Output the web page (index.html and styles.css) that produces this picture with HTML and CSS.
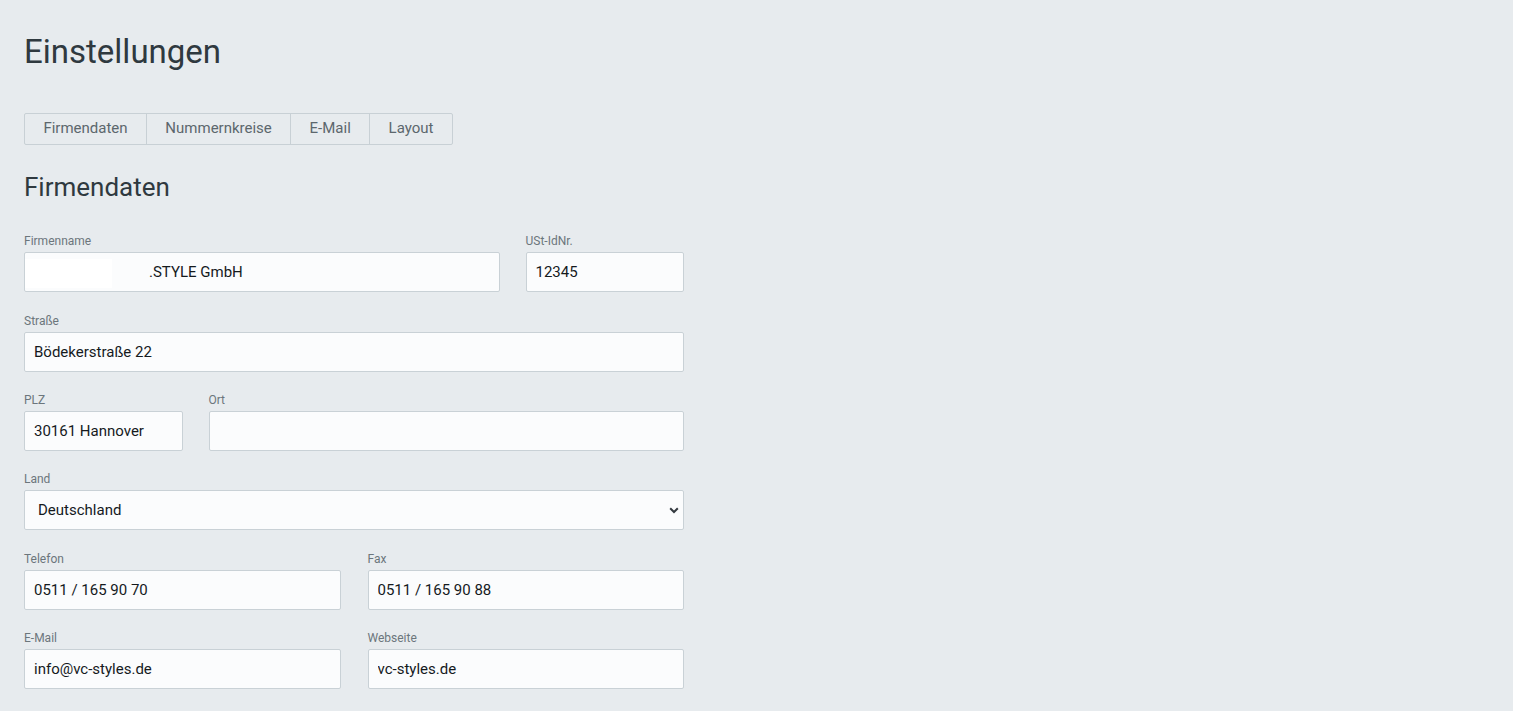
FILE: index.html
```html
<!DOCTYPE html>
<html lang="de">
  <head>
    <meta charset="UTF-8" />
    <meta name="viewport" content="width=device-width, initial-scale=1.0" />
    <title>Einstellungen</title>
    <link rel="stylesheet" href="styles.css">
  </head>
  <body>
    <div class="page">
      <h1 class="page-title">Einstellungen</h1>
      <div class="tabs">
        <button class="tab" type="button">Firmendaten</button>
        <button class="tab" type="button">Nummernkreise</button>
        <button class="tab" type="button">E-Mail</button>
        <button class="tab" type="button">Layout</button>
      </div>
      <h2 class="section-title">Firmendaten</h2>
      <form class="settings-form" autocomplete="off">
        <div class="row row-3-1">
          <div class="field">
            <label for="firma">Firmenname</label>
            <div class="masked">
              <input type="text" id="firma" class="indent" value=".STYLE GmbH" />
              <span class="mask"></span>
            </div>
          </div>
          <div class="field">
            <label for="ustid">USt-IdNr.</label>
            <input type="text" id="ustid" value="12345" />
          </div>
        </div>
        <div class="row">
          <div class="field">
            <label for="strasse">Straße</label>
            <input type="text" id="strasse" value="Bödekerstraße 22" />
          </div>
        </div>
        <div class="row row-1-3">
          <div class="field">
            <label for="plz">PLZ</label>
            <input type="text" id="plz" value="30161 Hannover" />
          </div>
          <div class="field">
            <label for="ort">Ort</label>
            <input type="text" id="ort" value="" />
          </div>
        </div>
        <div class="row">
          <div class="field">
            <label for="land">Land</label>
            <div class="select-wrap">
              <select id="land">
                <option>Deutschland</option>
                <option>Österreich</option>
                <option>Schweiz</option>
              </select>
              <svg class="chevron" width="10" height="7" viewBox="0 0 10 7">
                <path d="M1.2 1.2 L5 5 L8.8 1.2" fill="none" stroke="#343a40" stroke-width="2" />
              </svg>
            </div>
          </div>
        </div>
        <div class="row row-1-1">
          <div class="field">
            <label for="tel">Telefon</label>
            <input type="text" id="tel" value="0511 / 165 90 70" />
          </div>
          <div class="field">
            <label for="fax">Fax</label>
            <input type="text" id="fax" value="0511 / 165 90 88" />
          </div>
        </div>
        <div class="row row-1-1">
          <div class="field">
            <label for="mail">E-Mail</label>
            <input type="text" id="mail" value="info@vc-styles.de" />
          </div>
          <div class="field">
            <label for="web">Webseite</label>
            <input type="text" id="web" value="vc-styles.de" />
          </div>
        </div>
      </form>
    </div>
  </body>
</html>
```

FILE: styles.css
```css
body {
  margin: 0;
  background: #e7ebee;
  font-family: Roboto, "Liberation Sans", sans-serif;
  color: #2f393f;
}
.page {
  padding: 32px 24px 0 24px;
}
.page-title {
  margin: 0;
  font-size: 33px;
  font-weight: 400;
  line-height: 40px;
  color: #2f393f;
}
/* Tab bar */
.tabs {
  display: inline-flex;
  margin-top: 41px;
  border: 1px solid #c8d0d5;
  border-radius: 2px;
}
.tab {
  font-family: inherit;
  font-size: 15px;
  color: #5c676d;
  background: transparent;
  border: none;
  border-left: 1px solid #c8d0d5;
  height: 30px;
  padding: 0 18.4px 2px 18.4px;
  cursor: pointer;
}
.tab:first-child {
  border-left: none;
}
.section-title {
  margin: 27px 0 0 0;
  font-size: 26px;
  font-weight: 400;
  line-height: 31px;
  color: #2f393f;
}
/* Form */
.settings-form {
  width: 660px;
  margin-top: 30.3px;
}
.row {
  display: grid;
  grid-template-columns: 1fr;
  gap: 26px;
  margin-bottom: 20.4px;
}
.row-3-1 {
  grid-template-columns: 3fr 1fr;
}
.row-1-3 {
  grid-template-columns: 1fr 3fr;
}
.row-1-1 {
  grid-template-columns: 1fr 1fr;
  gap: 27px;
}
.field label {
  display: block;
  font-size: 12px;
  line-height: 16px;
  color: #6c767c;
  margin-bottom: 3px;
}
.field input,
.field select {
  display: block;
  width: 100%;
  height: 40px;
  box-sizing: border-box;
  border: 1px solid #c9d1d6;
  border-radius: 2px;
  background: #fbfcfd;
  font-family: inherit;
  font-size: 15px;
  color: #151a1d;
  padding: 0 9px;
  outline: none;
}
.masked {
  position: relative;
}
.field input.indent {
  text-indent: 115px;
}
.mask {
  position: absolute;
  left: 1px;
  top: 7px;
  width: 87px;
  height: 29px;
  background: #fff;
}
.select-wrap {
  position: relative;
}
.field select {
  appearance: none;
  padding: 0 13px;
}
.chevron {
  position: absolute;
  right: 5px;
  top: 17px;
  pointer-events: none;
}
```
